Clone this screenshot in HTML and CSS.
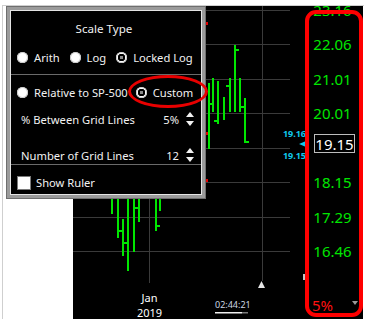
FILE: index.html
```html
<!DOCTYPE html>
<html lang="en">
<head>
    <meta charset="UTF-8">
    <meta name="viewport" content="width=device-width, initial-scale=1.0">
    <title>Scale Settings</title>
    <link rel="stylesheet" href="styles.css">
</head>
<body>
    <div class="shot">
        <div class="chart">
            <div class="plot">
                <svg class="plot-svg" viewBox="73 6 233 313" width="233" height="313">
                    <g stroke="#3a3a3a" stroke-width="1">
                        <line x1="73" y1="10.5" x2="290" y2="10.5"/>
                        <line x1="73" y1="44.5" x2="290" y2="44.5"/>
                        <line x1="73" y1="79.5" x2="290" y2="79.5"/>
                        <line x1="73" y1="113.5" x2="290" y2="113.5"/>
                        <line x1="73" y1="148.5" x2="290" y2="148.5"/>
                        <line x1="73" y1="182.5" x2="290" y2="182.5"/>
                        <line x1="73" y1="217.5" x2="290" y2="217.5"/>
                        <line x1="73" y1="251.5" x2="290" y2="251.5"/>
                        <line x1="149.5" y1="6" x2="149.5" y2="283"/>
                        <line x1="262.5" y1="6" x2="262.5" y2="281"/>
                    </g>
                    <g fill="#00e600">
                        <!-- bars right of the popup -->
                        <rect x="208" y="83" width="2" height="66"/>
                        <rect x="210" y="103" width="3" height="2"/>
                        <rect x="212" y="78" width="2" height="34"/>
                        <rect x="217" y="81" width="2" height="43"/>
                        <rect x="214" y="120" width="3" height="2"/>
                        <rect x="223" y="97" width="2" height="23"/>
                        <rect x="229" y="78" width="2" height="34"/>
                        <rect x="226" y="85" width="3" height="2"/>
                        <rect x="234" y="45" width="2" height="67"/>
                        <rect x="236" y="49" width="3" height="2"/>
                        <rect x="239" y="78" width="2" height="34"/>
                        <rect x="241" y="106" width="3" height="2"/>
                        <rect x="244" y="98" width="2" height="45"/>
                        <rect x="246" y="141" width="3" height="2"/>
                        <!-- bars under the popup -->
                        <rect x="111" y="150" width="2" height="64"/>
                        <rect x="117" y="150" width="2" height="88"/>
                        <rect x="119" y="230" width="3" height="2"/>
                        <rect x="122" y="219" width="2" height="37"/>
                        <rect x="124" y="242" width="3" height="2"/>
                        <rect x="127" y="150" width="2" height="121"/>
                        <rect x="133" y="150" width="2" height="102"/>
                        <rect x="135" y="207" width="3" height="2"/>
                        <rect x="138" y="150" width="2" height="72"/>
                        <rect x="155" y="150" width="2" height="81"/>
                        <rect x="157" y="225" width="3" height="2"/>
                        <rect x="159" y="150" width="2" height="61"/>
                    </g>
                    <g fill="#e00000">
                        <rect x="206" y="22" width="2" height="3"/>
                        <rect x="206" y="132" width="2" height="3"/>
                        <rect x="206" y="179" width="2" height="3"/>
                    </g>
                    <polygon points="258,288 265,288 261.5,281" fill="#e6e6e6"/>
                    <rect x="303" y="274" width="3" height="6" fill="#c4c4c4"/>
                    <text class="tag" x="306" y="137" text-anchor="end">19.16</text>
                    <polygon points="299,144 306,141 306,147" fill="#10c8ec"/>
                    <text class="tag" x="306" y="159" text-anchor="end">19.15</text>
                    <text class="date" x="149.5" y="302" text-anchor="middle">Jan</text>
                    <text class="date" x="149.5" y="317" text-anchor="middle">2019</text>
                    <text class="clock" x="215" y="308">02:44:21</text>
                    <rect x="215" y="312" width="27" height="1.5" fill="#f0f0f0"/>
                    <rect x="242" y="312" width="6" height="1.5" fill="#7a7a7a"/>
                </svg>
            </div>
            <div class="axis">
                <div class="ticks">
                    <div class="tick">23.16</div>
                    <div class="tick">22.06</div>
                    <div class="tick">21.01</div>
                    <div class="tick">20.01</div>
                    <div class="tick"><span class="last-price">19.15</span></div>
                    <div class="tick">18.15</div>
                    <div class="tick">17.29</div>
                    <div class="tick">16.46</div>
                </div>
                <div class="axis-foot">
                    <span class="step">5%</span>
                    <span class="foot-arrow"></span>
                </div>
                <div class="axis-mark"></div>
            </div>
        </div>

        <div class="panel">
            <div class="panel-title">Scale Type</div>
            <div class="row options">
                <label class="opt"><span class="radio"></span>Arith</label>
                <label class="opt"><span class="radio"></span>Log</label>
                <label class="opt"><span class="radio checked"></span>Locked Log</label>
            </div>
            <div class="sep"></div>
            <div class="row options tall">
                <label class="opt"><span class="radio"></span>Relative to SP-500</label>
                <label class="opt"><span class="radio checked"></span>Custom</label>
            </div>
            <div class="row field">
                <span class="field-name">% Between Grid Lines</span>
                <span class="field-value">5%</span>
                <span class="spin"><i class="up"></i><i class="down"></i></span>
            </div>
            <div class="row field second">
                <span class="field-name">Number of Grid Lines</span>
                <span class="field-value">12</span>
                <span class="spin"><i class="up"></i><i class="down"></i></span>
            </div>
            <div class="sep"></div>
            <div class="row check">
                <span class="box"></span>Show Ruler
            </div>
        </div>
        <div class="mark-ellipse"></div>
    </div>
</body>
</html>
```

FILE: styles.css
```css
*,
*::before,
*::after {
    box-sizing: border-box;
}
body {
    margin: 0;
    background-color: #fff;
    font-family: "Noto Sans", "DejaVu Sans", sans-serif;
}
.shot {
    position: relative;
    margin: 5px 0 0 2px;
    width: 362px;
    height: 314px;
    border-left: 1px solid #cfcfcf;
    border-top: 1px solid #cfcfcf;
    box-shadow: 0 2px 0 #b4b4b4;
}
.chart {
    display: flex;
    margin-left: 70px;
    width: 290px;
    height: 313px;
    background-color: #000;
    overflow: hidden;
}
.plot {
    width: 233px;
    flex: none;
}
.plot-svg {
    display: block;
}
.tag {
    font-size: 9px;
    font-weight: bold;
    fill: #10c8ec;
}
.date {
    font-size: 11px;
    fill: #fff;
}
.clock {
    font-size: 9px;
    fill: #cbd6e2;
}
.axis {
    position: relative;
    width: 57px;
    flex: none;
    display: flex;
    flex-direction: column;
    color: #00e600;
    font-size: 15px;
}
.ticks {
    margin-top: -13.75px;
}
.tick {
    height: 34.5px;
    display: flex;
    align-items: center;
    justify-content: center;
    padding-right: 4px;
}
.last-price {
    display: flex;
    align-items: center;
    justify-content: center;
    width: 41px;
    height: 19px;
    margin-bottom: 8px;
    margin-left: 4px;
    border: 1px solid #bdbdbd;
    color: #fff;
}
.axis-foot {
    margin-top: auto;
    margin-bottom: 4px;
    height: 20px;
    display: flex;
    align-items: center;
    justify-content: space-between;
    padding: 0 5px 0 6px;
}
.step {
    color: #ff1010;
}
.foot-arrow {
    width: 0;
    height: 0;
    margin-top: -4px;
    border-left: 3px solid transparent;
    border-right: 3px solid transparent;
    border-top: 4px solid #9a9a9a;
}
.axis-mark {
    position: absolute;
    left: -1px;
    top: 4px;
    right: 0;
    bottom: 2px;
    border: 4px solid #ff0000;
    border-radius: 11px;
}

/* popup */
.panel {
    position: absolute;
    left: 4px;
    top: 1px;
    width: 198px;
    height: 191px;
    display: flex;
    flex-direction: column;
    background-color: #000;
    border: 3px solid #9a9a9a;
    box-shadow: inset 0 0 0 1px #e4e4e4, 0 0 0 1px #6e6e6e;
    color: #f2f2f2;
    font-size: 11.2px;
}
.panel-title {
    height: 36px;
    display: flex;
    align-items: center;
    justify-content: center;
    padding-right: 4px;
    font-size: 11.6px;
}
.row {
    display: flex;
    align-items: center;
    padding: 0 7px;
}
.options {
    height: 22px;
    gap: 10px;
    margin-bottom: 6px;
}
.options.tall {
    height: 35px;
    gap: 8px;
    margin-bottom: 0;
}
.opt {
    display: flex;
    align-items: center;
    gap: 6px;
    white-space: nowrap;
}
.radio {
    width: 11px;
    height: 11px;
    border-radius: 50%;
    background-color: #fff;
    box-shadow: inset 0 0 0 1px #c8c8c8;
}
.radio.checked {
    background: radial-gradient(circle, #8a8a8a 0 1.5px, #000 2px 3.5px, #fff 4px);
}
.sep {
    height: 1px;
    margin: 0 1px;
    background-color: #6a6a6a;
}
.field {
    height: 18px;
}
.field.second {
    margin-top: 18px;
}
.field-name {
    flex: 1;
    padding-left: 4px;
}
.field-value {
    margin-right: 7px;
}
.spin {
    display: flex;
    flex-direction: column;
    gap: 4px;
    width: 9px;
}
.spin i {
    width: 0;
    height: 0;
    border-left: 4px solid transparent;
    border-right: 4px solid transparent;
}
.spin .up {
    border-bottom: 5px solid #f2f2f2;
}
.spin .down {
    border-top: 5px solid #f2f2f2;
}
.check {
    flex: 1;
    gap: 5px;
    padding-top: 5px;
}
.box {
    width: 14px;
    height: 14px;
    background-color: #fff;
    border: 1px solid #7a7a7a;
}
.mark-ellipse {
    position: absolute;
    left: 125px;
    top: 69px;
    width: 80px;
    height: 33px;
    border: 3.5px solid #e80000;
    border-radius: 50%;
}
```
